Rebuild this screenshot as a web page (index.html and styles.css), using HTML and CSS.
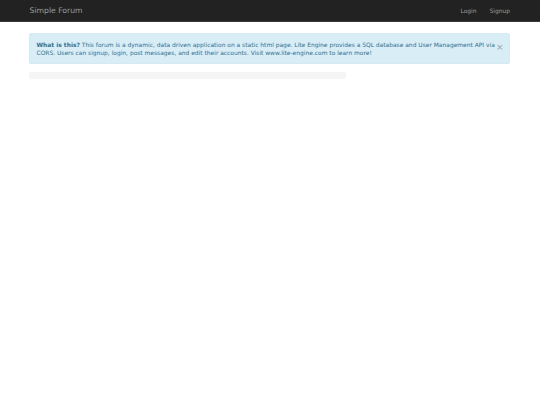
FILE: index.html
```html
<!DOCTYPE html>
<html lang="en">
<head>
    <meta charset="UTF-8">
    <title>Simple Forum</title>
    <link rel="stylesheet" href="styles.css">
</head>
<body>
    <!-- Navbar -->
    <nav class="navbar">
        <a class="brand" href="#">Simple Forum</a>
        <div class="nav-links">
            <a href="#">Login</a>
            <a href="#">Signup</a>
        </div>
    </nav>

    <div class="container">
        <div class="alert">
            <p><strong>What is this?</strong> This forum is a dynamic, data driven application on a static html page. Lite Engine provides a SQL database and User Management API via CORS. Users can signup, login, post messages, and edit their accounts. Visit www.lite-engine.com to learn more!</p>
            <span class="close">&times;</span>
        </div>
        <div class="main-column">
            <div class="progress"></div>
        </div>
    </div>
</body>
</html>
```

FILE: styles.css
```css
* {
    margin: 0;
    padding: 0;
    box-sizing: border-box;
}

body {
    background: #fff;
    font-family: "DejaVu Sans", sans-serif;
    font-size: 5.95px;
    line-height: 8.4px;
    color: #333;
}

a {
    text-decoration: none;
}

.navbar {
    display: flex;
    justify-content: space-between;
    align-items: center;
    height: 22px;
    padding: 1px 30px 0 29.5px;
    background: #222;
    border-bottom: 1px solid #3a3a3a;
}

.brand {
    font-size: 7.7px;
    color: #9d9d9d;
}

.nav-links {
    display: flex;
    gap: 13px;
}

.nav-links a {
    color: #9d9d9d;
}

.container {
    padding: 11px 30px 0 29px;
}

.alert {
    display: flex;
    align-items: flex-start;
    height: 31px;
    padding: 7px 7px 0 6.5px;
    background: #d9edf7;
    border: 1px solid #d3ebf5;
    border-radius: 2px;
    color: #31708f;
}

.alert p {
    flex: 1;
}

.close {
    width: 6px;
    margin-top: 2px;
    font-size: 9px;
    line-height: 9px;
    font-weight: bold;
    color: #a5b3ba;
}

.main-column {
    width: 317px;
    margin-top: 8px;
}

.progress {
    height: 7px;
    background: #f5f5f5;
    border-radius: 2px;
}
```
